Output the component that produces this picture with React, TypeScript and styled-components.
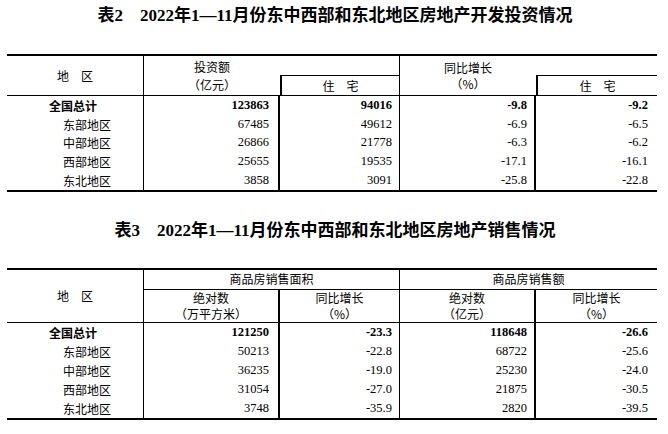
import React from "react";
import styled, { createGlobalStyle } from "styled-components";

const GlobalStyle = createGlobalStyle`
  html, body { margin: 0; padding: 0; background: #fff; }
  body { font-family: "Liberation Serif", "Noto Sans CJK SC", serif; color: #000; }
  * { box-sizing: border-box; }
`;

const Page = styled.div`
  width: 668px;
  height: 434px;
  padding: 0 11px 0 7px;
  display: flex;
  flex-direction: column;
  background: #fff;
`;

const Title = styled.h2<{ $mt: number; $mb: number }>`
  margin: ${(p) => p.$mt}px 0 ${(p) => p.$mb}px;
  padding-left: 6px;
  height: 32px;
  line-height: 32px;
  text-align: center;
  font-size: 17px;
  font-weight: 700;
  font-family: "Liberation Serif", "Noto Sans CJK SC", serif;
  white-space: pre;
`;

const Grid = styled.div<{ $rows: string }>`
  display: grid;
  grid-template-columns: 137px 136px 120px 136px 121px;
  grid-template-rows: ${(p) => p.$rows};
  border-top: 2px solid #000;
  border-bottom: 2px solid #000;
`;

const HeadCell = styled.div<{
  $col: string;
  $row: string;
  $r?: number;
  $l?: number;
  $t?: number;
  $b?: number;
  $lh?: number;
  $top?: boolean;
}>`
  grid-column: ${(p) => p.$col};
  grid-row: ${(p) => p.$row};
  border-right: ${(p) => p.$r ?? 0}px solid #000;
  border-left: ${(p) => p.$l ?? 0}px solid #000;
  border-top: ${(p) => p.$t ?? 0}px solid #000;
  border-bottom: ${(p) => p.$b ?? 0}px solid #000;
  display: flex;
  flex-direction: column;
  align-items: center;
  justify-content: ${(p) => (p.$top ? "flex-start" : "center")};
  padding-top: ${(p) => (p.$top ? 0 : 0)}px;
  font-family: "Noto Sans CJK SC", "Liberation Sans", sans-serif;
  font-size: 12px;
  line-height: ${(p) => p.$lh ?? 18}px;
  white-space: pre;
`;

const LabelCell = styled.div<{ $bold?: boolean }>`
  grid-column: 1;
  border-right: 1px solid #000;
  display: flex;
  align-items: center;
  padding-left: ${(p) => (p.$bold ? 42 : 56)}px;
  font-family: "Noto Sans CJK SC", "Liberation Sans", sans-serif;
  font-size: 12px;
  font-weight: ${(p) => (p.$bold ? 700 : 400)};
  white-space: pre;
`;

const NumCell = styled.div<{ $r: number; $pad: number; $bold?: boolean }>`
  border-right: ${(p) => p.$r}px solid #000;
  display: flex;
  align-items: center;
  justify-content: flex-end;
  padding-right: ${(p) => p.$pad}px;
  font-family: "Liberation Serif", serif;
  font-size: 12.5px;
  font-weight: ${(p) => (p.$bold ? 700 : 400)};
`;

type Row = { name: string; v: string[]; bold?: boolean };

const cols = [
  { r: 2, pad: 9 },
  { r: 1, pad: 7 },
  { r: 2, pad: 7 },
  { r: 0, pad: 9 },
];

const invest: Row[] = [
  { name: "全国总计", v: ["123863", "94016", "-9.8", "-9.2"], bold: true },
  { name: "东部地区", v: ["67485", "49612", "-6.9", "-6.5"] },
  { name: "中部地区", v: ["26866", "21778", "-6.3", "-6.2"] },
  { name: "西部地区", v: ["25655", "19535", "-17.1", "-16.1"] },
  { name: "东北地区", v: ["3858", "3091", "-25.8", "-22.8"] },
];

const sales: Row[] = [
  { name: "全国总计", v: ["121250", "-23.3", "118648", "-26.6"], bold: true },
  { name: "东部地区", v: ["50213", "-22.8", "68722", "-25.6"] },
  { name: "中部地区", v: ["36235", "-19.0", "25230", "-24.0"] },
  { name: "西部地区", v: ["31054", "-27.0", "21875", "-30.5"] },
  { name: "东北地区", v: ["3748", "-35.9", "2820", "-39.5"] },
];

const DataRows = ({ rows }: { rows: Row[] }) => (
  <>
    {rows.map((row) => (
      <React.Fragment key={row.name}>
        <LabelCell $bold={row.bold}>{row.name}</LabelCell>
        {row.v.map((val, i) => (
          <NumCell key={i} $r={cols[i].r} $pad={cols[i].pad} $bold={row.bold}>
            {val}
          </NumCell>
        ))}
      </React.Fragment>
    ))}
  </>
);

export default function App() {
  return (
    <>
      <GlobalStyle />
      <Page>
        <Title $mt={0} $mb={22}>
          {"表2　2022年1—11月份东中西部和东北地区房地产开发投资情况"}
        </Title>
        <Grid $rows="19px 21px repeat(5, 18.8px)">
          <HeadCell $col="1" $row="1 / 3" $r={1} $b={1}>
            {"地　区"}
          </HeadCell>
          <HeadCell $col="2" $row="1 / 3" $b={1}>
            <span>投资额</span>
            <span>（亿元）</span>
          </HeadCell>
          <HeadCell $col="3" $row="1" $r={1} />
          <HeadCell $col="3" $row="2" $r={1} $l={2} $t={1} $b={1}>
            {"住　宅"}
          </HeadCell>
          <HeadCell $col="4" $row="1 / 3" $b={1} $lh={16}>
            <span>同比增长</span>
            <span>（%）</span>
          </HeadCell>
          <HeadCell $col="5" $row="1" />
          <HeadCell $col="5" $row="2" $l={2} $t={1} $b={1}>
            {"住　宅"}
          </HeadCell>
          <DataRows rows={invest} />
        </Grid>

        <Title $mt={23} $mb={21}>
          {"表3　2022年1—11月份东中西部和东北地区房地产销售情况"}
        </Title>
        <Grid $rows="20px 33px repeat(5, 19px)">
          <HeadCell $col="1" $row="1 / 3" $r={1} $b={1}>
            {"地　区"}
          </HeadCell>
          <HeadCell $col="2 / 4" $row="1" $r={1} $b={1}>
            商品房销售面积
          </HeadCell>
          <HeadCell $col="4 / 6" $row="1" $b={1}>
            商品房销售额
          </HeadCell>
          <HeadCell $col="2" $row="2" $r={2} $b={1} $lh={16} $top>
            <span>绝对数</span>
            <span>（万平方米）</span>
          </HeadCell>
          <HeadCell $col="3" $row="2" $r={1} $b={1} $lh={16} $top>
            <span>同比增长</span>
            <span>（%）</span>
          </HeadCell>
          <HeadCell $col="4" $row="2" $r={2} $b={1} $lh={16} $top>
            <span>绝对数</span>
            <span>（亿元）</span>
          </HeadCell>
          <HeadCell $col="5" $row="2" $b={1} $lh={16} $top>
            <span>同比增长</span>
            <span>（%）</span>
          </HeadCell>
          <DataRows rows={sales} />
        </Grid>
      </Page>
    </>
  );
}
